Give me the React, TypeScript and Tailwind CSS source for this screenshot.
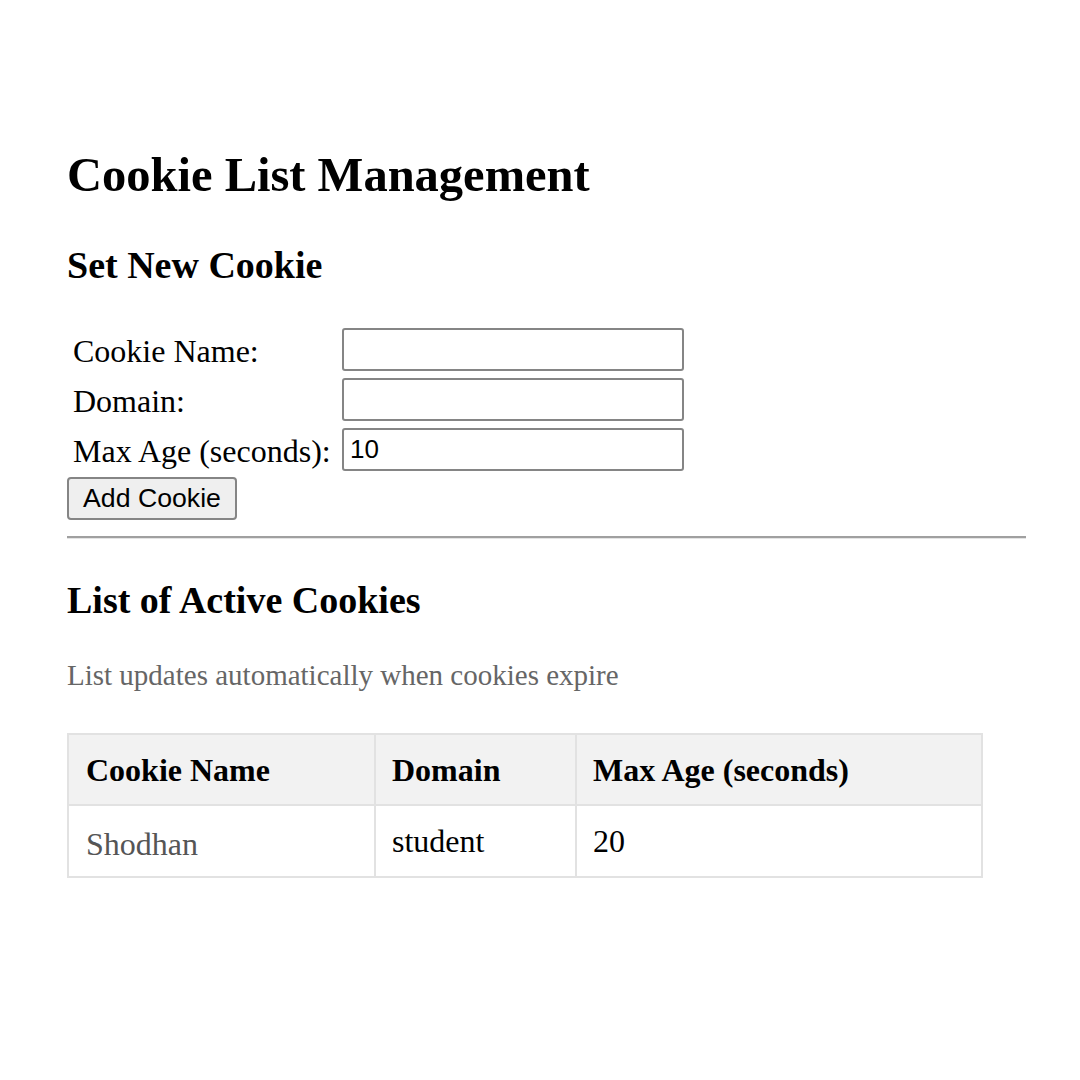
import React, { useState } from "react";

type CookieRow = { name: string; domain: string; maxAge: number };

const serif = "font-['Liberation_Serif','Times_New_Roman',serif]";
const sans = "font-['Liberation_Sans',Arial,sans-serif]";

const App: React.FC = () => {
  const [name, setName] = useState("");
  const [domain, setDomain] = useState("");
  const [maxAge, setMaxAge] = useState("10");
  const [cookies, setCookies] = useState<CookieRow[]>([
    { name: "Shodhan", domain: "student", maxAge: 20 },
  ]);

  const addCookie = () => {
    if (!name) return;
    setCookies((c) => [...c, { name, domain, maxAge: Number(maxAge) || 0 }]);
    setName("");
    setDomain("");
  };

  const inputCls = `${sans} h-[43px] w-[342px] rounded-[3px] border-2 border-[#858585] bg-white px-[6px] text-[26px] text-black outline-none`;
  const labelCls = "h-[43px] text-[32px] leading-[46px] whitespace-nowrap";

  return (
    <div className={`${serif} min-h-[1080px] bg-white pl-[67px] pt-[147px] text-black`}>
      <h1 className="text-[48.5px] font-bold leading-[56px]">Cookie List Management</h1>

      <h2 className="mt-[40px] text-[38px] font-bold leading-[44px]">Set New Cookie</h2>

      {/* form */}
      <div className="mt-[41px] grid grid-cols-[269px_342px] gap-y-[7px] pl-[6px]">
        <label className={labelCls}>Cookie Name:</label>
        <input className={inputCls} value={name} onChange={(e) => setName(e.target.value)} />
        <label className={labelCls}>Domain:</label>
        <input className={inputCls} value={domain} onChange={(e) => setDomain(e.target.value)} />
        <label className={labelCls}>Max Age (seconds):</label>
        <input className={inputCls} value={maxAge} onChange={(e) => setMaxAge(e.target.value)} />
      </div>
      <button
        onClick={addCookie}
        className={`${sans} mt-[6px] block h-[43px] w-[170px] rounded-[4px] border-2 border-[#858585] bg-[#efefef] text-[26.67px] leading-none text-black`}
      >
        Add Cookie
      </button>

      <div className="mt-[16px] w-[959px] border-t-2 border-b border-t-[#a0a0a0] border-b-[#e4e4e4]" />

      <h2 className="mt-[39px] text-[38px] font-bold leading-[44px]">List of Active Cookies</h2>

      <p className="mt-[33px] text-[29px] leading-[40px] text-[#666666]">
        List updates automatically when cookies expire
      </p>

      <table className="mt-[38px] w-[916px] border-collapse text-[32px]">
        <thead>
          <tr className="bg-[#f2f2f2]">
            <th className="h-[71px] w-[307px] border-2 border-[#e2e2e2] pl-[17px] text-left font-bold">Cookie Name</th>
            <th className="h-[71px] w-[201px] border-2 border-[#e2e2e2] pl-[16px] text-left font-bold">Domain</th>
            <th className="h-[71px] border-2 border-[#e2e2e2] pl-[16px] text-left font-bold">Max Age (seconds)</th>
          </tr>
        </thead>
        <tbody>
          {cookies.map((c, i) => (
            <tr key={i}>
              <td className="h-[72px] border-2 border-[#e2e2e2] pl-[17px] pt-[6px] text-[#555555]">{c.name}</td>
              <td className="h-[72px] border-2 border-[#e2e2e2] pl-[16px]">{c.domain}</td>
              <td className="h-[72px] border-2 border-[#e2e2e2] pl-[16px]">{c.maxAge}</td>
            </tr>
          ))}
        </tbody>
      </table>
    </div>
  );
};

export default App;
